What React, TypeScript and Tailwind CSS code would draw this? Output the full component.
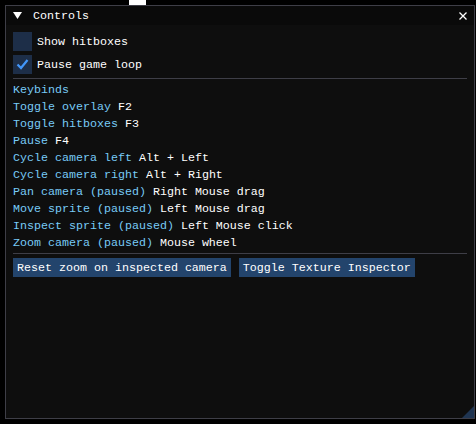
import { useState } from "react";

const keybinds: [string, string][] = [
  ["Toggle overlay", "F2"],
  ["Toggle hitboxes", "F3"],
  ["Pause", "F4"],
  ["Cycle camera left", "Alt + Left"],
  ["Cycle camera right", "Alt + Right"],
  ["Pan camera (paused)", "Right Mouse drag"],
  ["Move sprite (paused)", "Left Mouse drag"],
  ["Inspect sprite (paused)", "Left Mouse click"],
  ["Zoom camera (paused)", "Mouse wheel"],
];

const Checkbox = ({ label, checked, onToggle }: { label: string; checked: boolean; onToggle: () => void }) => (
  <div className="flex items-center gap-[5px] h-[19px] cursor-pointer" onClick={onToggle}>
    <div className="w-[19px] h-[19px] bg-[#1d2e48] flex items-center justify-center">
      {checked && (
        <svg width="13" height="13" viewBox="0 0 13 13">
          <polyline points="1.5,6.5 5,10 11.5,2" fill="none" stroke="#4296fa" strokeWidth="2.2" />
        </svg>
      )}
    </div>
    <span className="text-white leading-[15px] pt-[2px]">{label}</span>
  </div>
);

const App = () => {
  const [hitboxes, setHitboxes] = useState(false);
  const [paused, setPaused] = useState(true);

  return (
    <div
      className="w-[476px] h-[424px] bg-black flex flex-col text-[11.67px] leading-[13px] whitespace-pre"
      style={{ fontFamily: '"Liberation Mono", "DejaVu Sans Mono", monospace' }}
    >
      <div className="h-[5px] flex">
        <div className="ml-[129px] w-[17px] h-[5px] bg-white" />
      </div>

      <div className="ml-[5px] w-[470px] h-[414px] border border-[#3e3e47] bg-[#0e0e0e] flex flex-col relative">
        {/* title bar */}
        <div className="h-[19px] bg-[#0a0a0a] flex items-center pt-[2px]">
          <svg width="9" height="8" viewBox="0 0 9 8" className="ml-[7px] -mt-[1px]">
            <polygon points="0,0 9,0 4.5,7" fill="#fff" />
          </svg>
          <span className="ml-[11px] text-white">Controls</span>
          <div className="flex-1" />
          <svg width="8" height="8" viewBox="0 0 8 8" className="mr-[7px] -mt-[1px]">
            <path d="M0.5 0.5 L7.5 7.5 M7.5 0.5 L0.5 7.5" stroke="#fff" strokeWidth="1.3" />
          </svg>
        </div>

        <div className="flex flex-col gap-[4px] px-[7px] pt-[7px]">
          <Checkbox label="Show hitboxes" checked={hitboxes} onToggle={() => setHitboxes(!hitboxes)} />
          <Checkbox label="Pause game loop" checked={paused} onToggle={() => setPaused(!paused)} />
          <div className="h-px bg-[#3e3e47]" />
          <div className="text-[#78cbf7] h-[13px] leading-[15px]">Keybinds</div>
          {keybinds.map(([action, key]) => (
            <div key={action} className="h-[13px] leading-[15px]">
              <span className="text-[#78cbf7]">{action}</span>
              <span className="text-white"> {key}</span>
            </div>
          ))}
          <div className="h-px bg-[#3e3e47]" />
          <div className="flex gap-[8px]">
            <button className="h-[19px] px-[4px] pt-[1px] bg-[#23446c] text-white leading-[13px]">
              Reset zoom on inspected camera
            </button>
            <button className="h-[19px] px-[4px] pt-[1px] bg-[#23446c] text-white leading-[13px]">
              Toggle Texture Inspector
            </button>
          </div>
        </div>

        {/* resize grip */}
        <svg width="12" height="12" viewBox="0 0 12 12" className="absolute right-0 bottom-0">
          <polygon points="12,0 12,12 0,12" fill="#1f3552" />
        </svg>
      </div>
    </div>
  );
};

export default App;
